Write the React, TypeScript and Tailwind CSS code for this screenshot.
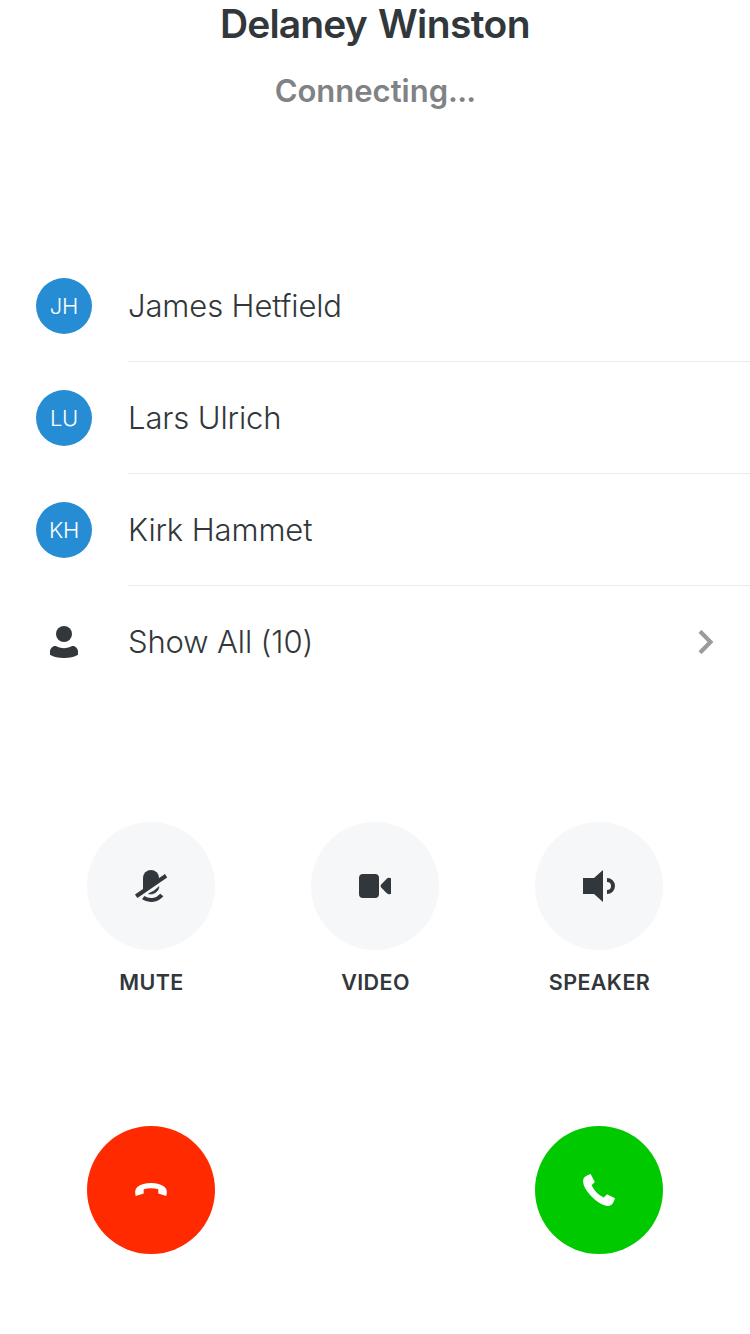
import type { ReactNode } from "react";

const participants = [
  { initials: "JH", name: "James Hetfield" },
  { initials: "LU", name: "Lars Ulrich" },
  { initials: "KH", name: "Kirk Hammet" },
];

function Icon({ children }: { children: ReactNode }) {
  return (
    <svg viewBox="0 0 32 32" className="size-8 overflow-visible" fill="currentColor" aria-hidden="true">
      {children}
    </svg>
  );
}

function MuteIcon() {
  return (
    <Icon>
      <path d="M8 22V8a8 8 0 0 1 16 0v3z" />
      <path d="M0 24.6 30 4 32.2 7.5 2.4 28z" />
      <path d="M13.6 23.7Q19.5 21.500 24 16.700A8.200 8.200 0 0 1 13.6 23.7z" stroke="currentColor" strokeWidth="0.8" />
      <path d="M8.2 27.6A14 14 0 0 0 26.8 25" fill="none" stroke="currentColor" strokeWidth="4" />
    </Icon>
  );
}

function VideoIcon() {
  return (
    <Icon>
      <rect y="4" width="20" height="24" rx="4" />
      <path d="M22.2 14.4 27.5 8.9C28.8 7.6 30.4 7.5 32 8.3V23.7C30.4 24.5 28.8 24.4 27.5 23.1L22.2 17.6Q20.8 16 22.2 14.4z" />
    </Icon>
  );
}

function SpeakerIcon() {
  return (
    <Icon>
      <path d="M0 8H11L20 0V32L11 24H0z" />
      <path d="M24 8a8 8 0 0 1 0 16v-4a4 4 0 0 0 0-8z" />
    </Icon>
  );
}

function PersonIcon() {
  return (
    <Icon>
      <circle cx="16" cy="8" r="8" />
      <path d="M7.2 20C8.8 20 11 22.2 16 22.2S23.2 20 24.8 20C27.5 20 30 22.6 30 25.5V28.7C26.5 31 21.5 32 16 32S5.5 31 2 28.7V25.5C2 22.6 4.5 20 7.2 20z" />
    </Icon>
  );
}

function HangUpIcon() {
  return (
    <Icon>
      <path d="M0.7 21.9C-0.3 18 0 15 2.3 13 5.6 10.2 10.5 9 16 9S26.4 10.2 29.7 13C32 15 32.3 18 31.3 21.9L23.3 19.6V15.2C18.7 13.9 13.3 13.9 8.7 15.2V19.6z" />
    </Icon>
  );
}

function AnswerIcon() {
  return (
    <Icon>
      <path d="M7.7 0 11.8 8 8.6 11.3C11 16.7 15.3 21 20.7 23.4L24 20.2 32 24.3C30.7 28.2 29.3 31 26.7 31.7 22 32.7 15.6 29.6 9 23 2.4 16.4-0.7 10 0.3 5.3 1 2.7 3.8 1.3 7.7 0z" />
    </Icon>
  );
}

const controls = [
  { label: "MUTE", icon: <MuteIcon /> },
  { label: "VIDEO", icon: <VideoIcon /> },
  { label: "SPEAKER", icon: <SpeakerIcon /> },
];

export default function App() {
  return (
    <main className="flex h-[1334px] w-[750px] flex-col overflow-hidden bg-white font-['Inter',sans-serif] text-[#32373b]">
      <header className="flex h-[250px] flex-col items-center">
        <h1 className="text-[39px] leading-12 font-semibold tracking-[-0.6px] [word-spacing:2px]">
          <span className="tracking-[-0.9px]">Delaney</span> Winston
        </h1>
        <p className="mt-[23px] text-[31px] leading-10 font-semibold text-[#808284]">
          Connecting<span className="tracking-[-0.8px]">...</span>
        </p>
      </header>

      <ul className="text-[31px] leading-10 font-light tracking-[-0.12px]">
        {participants.map(({ initials, name }) => (
          <li key={initials} className="flex h-28 pl-9">
            <div className="flex w-[92px] items-center">
              <span className="flex size-14 items-center justify-center rounded-full bg-[#268dd5] text-[22px] tracking-[-0.2px] text-white">
                {initials}
              </span>
            </div>
            <div className="flex flex-1 items-center border-b border-[#ebebeb]">{name}</div>
          </li>
        ))}
        <li className="flex h-28 items-center pr-8 pl-12">
          <div className="w-20">
            <PersonIcon />
          </div>
          <span className="flex-1 pb-px">Show All (10)</span>
          <svg viewBox="0 0 24 24" className="size-6" fill="none" stroke="#999b9d" strokeWidth="4.2" aria-hidden="true">
            <path d="M6 1.3 16.5 12 6 22.7" />
          </svg>
        </li>
      </ul>

      <section className="mt-[124px] grid grid-cols-3 px-[39px]">
        {controls.map(({ label, icon }) => (
          <div key={label} className="flex flex-col items-center">
            <button className="flex size-32 items-center justify-center rounded-full bg-[#f6f7f9]" aria-label={label}>
              {icon}
            </button>
            <span className="mt-[18px] pl-px text-[21.5px] leading-7 font-semibold tracking-[0.4px]">{label}</span>
          </div>
        ))}
      </section>

      <footer className="mt-[130px] flex justify-between px-[87px] text-white">
        <button className="flex size-32 items-center justify-center rounded-full bg-[#ff2a00]">
          <HangUpIcon />
        </button>
        <button className="flex size-32 items-center justify-center rounded-full bg-[#00c900]">
          <AnswerIcon />
        </button>
      </footer>
    </main>
  );
}
